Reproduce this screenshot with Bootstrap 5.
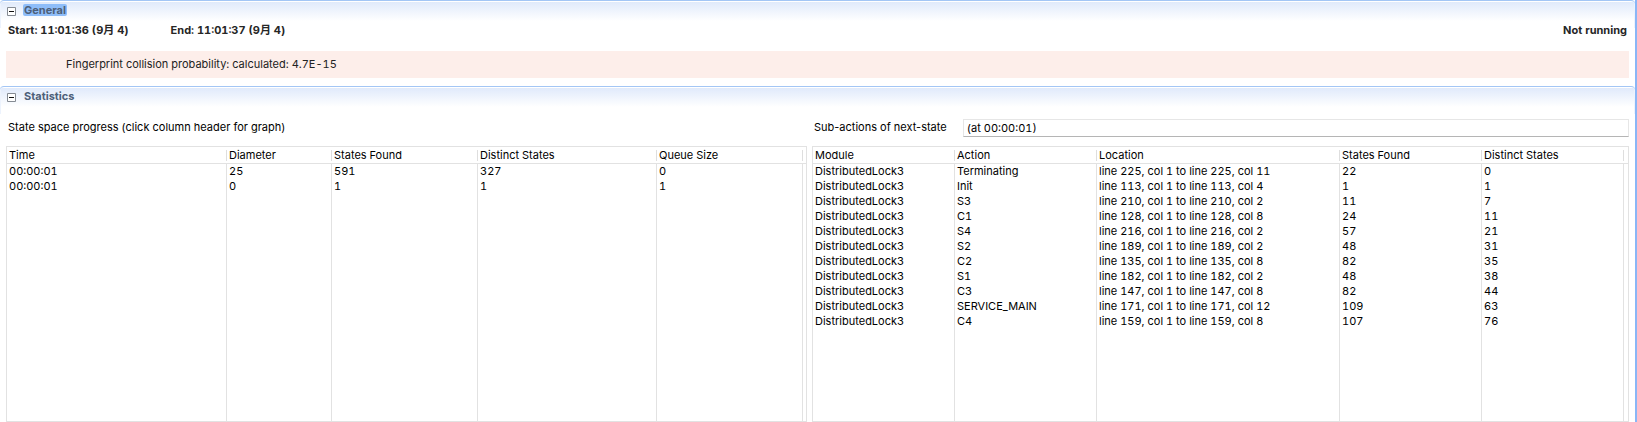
<!DOCTYPE html>
<html lang="en">
<head>
<meta charset="utf-8">
<meta name="viewport" content="width=device-width, initial-scale=1">
<title>Model Checking Results</title>
<link href="https://cdn.jsdelivr.net/npm/bootstrap@5.3.0/dist/css/bootstrap.min.css" rel="stylesheet">
<style>
  body { font: 11px/15px Inter, "Noto Sans CJK JP", sans-serif; color: #000; background: #fff; border-right: 2px solid #8ab6f6; }
  .run-line, .notice, .moment, .data-grid { font-variant-numeric: tabular-nums; }
  .section-bar { height: 28px; padding: 3px 7px 0; gap: 7px; border-top: 1px solid #a3c6f5; border-radius: 4px 4px 0 0;
    background: linear-gradient(#fff 0 1px, #e0eafb 1px, #fff 20px);
    box-shadow: inset 1px 0 0 #edf3fd, inset -1px 0 0 #edf3fd; }
  .section-title { font-size: 11px; line-height: 12px; font-weight: 700; color: #4d6079; padding: 0 1px; margin: 0; }
  .section-title.picked { background: #8ebdf9; border-radius: 2px; }
  .fold { width: 9px; height: 9px; margin-top: 3px; background: none; }
  .run-line { font-weight: 700; color: #262626; padding: 0 8px; gap: 42px; margin-top: -5px; }
  .notice { background: #fdeeea; color: #222; margin: 13px 6px 8px; padding: 6px 60px; }
  .stats { padding: 0 6px; gap: 5px; display: grid; grid-template-columns: 801fr 817fr; }
  .caption-row { height: 18px; line-height: 16px; padding-left: 2px; gap: 16px; margin: 5px 0 9px; }
  .moment { height: 18px; border: 1px solid #e6e6e6; border-bottom-color: #b5b5b5; padding: 0 3px; color: #000; background: #fff; }
  .grid-frame { border: 1px solid #e2e2e2; }
  .data-grid { table-layout: fixed; border-collapse: separate; border-spacing: 0; height: 100%; width: 100%; }
  .data-grid th { height: 17px; padding: 0 2px; font-weight: 400; border-bottom: 1px solid #e2e2e2; white-space: nowrap;
    background: linear-gradient(#dedede, #dedede) right 3px / 1px 11px no-repeat; }
  .data-grid td { height: 15px; padding: 0 2px; border-right: 1px solid #e2e2e2; white-space: nowrap; }
  .data-grid th:last-child { background: none; }
  .data-grid td:last-child { border-right: 0; }
  .data-grid .rest td { height: auto; }
  .sorter { font: inherit; color: inherit; background: none; }
</style>
</head>
<body class="min-vh-100 d-flex flex-column">
<section>
  <header class="section-bar d-flex align-items-start">
    <button class="fold border-0 p-0 d-flex" type="button" aria-label="Collapse General"><svg width="9" height="9" viewBox="0 0 9 9"><path d="M.5.5h8v8h-8z" fill="#fff" stroke="#858b93"/><path d="M2 4.5h5" stroke="#111"/></svg></button>
    <h2 class="section-title picked">General</h2>
  </header>
  <div class="run-line d-flex">
    <span>Start: 11:01:36 (9月 4)</span>
    <span>End: 11:01:37 (9月 4)</span>
    <span class="ms-auto">Not running</span>
  </div>
  <div class="notice">Fingerprint collision probability: calculated: 4.7E-15</div>
</section>
<section class="flex-grow-1 d-flex flex-column">
  <header class="section-bar d-flex align-items-start">
    <button class="fold border-0 p-0 d-flex" type="button" aria-label="Collapse Statistics"><svg width="9" height="9" viewBox="0 0 9 9"><path d="M.5.5h8v8h-8z" fill="#fff" stroke="#858b93"/><path d="M2 4.5h5" stroke="#111"/></svg></button>
    <h2 class="section-title">Statistics</h2>
  </header>
  <div class="stats flex-grow-1">
    <div class="d-flex flex-column">
      <div class="caption-row d-flex align-items-start">State space progress (click column header for graph)</div>
      <div class="grid-frame flex-grow-1 d-flex">
        <table class="data-grid">
          <colgroup><col style="width:220px"><col style="width:105px"><col style="width:146px"><col style="width:179px"><col style="width:146px"><col></colgroup>
          <thead><tr>
            <th><button class="sorter border-0 p-0" type="button">Time</button></th>
            <th><button class="sorter border-0 p-0" type="button">Diameter</button></th>
            <th><button class="sorter border-0 p-0" type="button">States Found</button></th>
            <th><button class="sorter border-0 p-0" type="button">Distinct States</button></th>
            <th><button class="sorter border-0 p-0" type="button">Queue Size</button></th><th></th>
          </tr></thead>
          <tbody>
            <tr><td>00:00:01</td><td>25</td><td>591</td><td>327</td><td>0</td><td></td></tr>
            <tr><td>00:00:01</td><td>0</td><td>1</td><td>1</td><td>1</td><td></td></tr>
            <tr class="rest"><td></td><td></td><td></td><td></td><td></td><td></td></tr>
          </tbody>
        </table>
      </div>
    </div>
    <div class="d-flex flex-column">
      <div class="caption-row d-flex align-items-start">
        <label for="moment">Sub-actions of next-state</label>
        <input class="moment flex-grow-1" id="moment" type="text" value="(at 00:00:01)" readonly>
      </div>
      <div class="grid-frame flex-grow-1 d-flex">
        <table class="data-grid">
          <colgroup><col style="width:142px"><col style="width:142px"><col style="width:243px"><col style="width:142px"><col style="width:142px"><col></colgroup>
          <thead><tr><th>Module</th><th>Action</th><th>Location</th><th>States Found</th><th>Distinct States</th><th></th></tr></thead>
          <tbody>
            <tr><td>DistributedLock3</td><td>Terminating</td><td>line 225, col 1 to line 225, col 11</td><td>22</td><td>0</td><td></td></tr>
            <tr><td>DistributedLock3</td><td>Init</td><td>line 113, col 1 to line 113, col 4</td><td>1</td><td>1</td><td></td></tr>
            <tr><td>DistributedLock3</td><td>S3</td><td>line 210, col 1 to line 210, col 2</td><td>11</td><td>7</td><td></td></tr>
            <tr><td>DistributedLock3</td><td>C1</td><td>line 128, col 1 to line 128, col 8</td><td>24</td><td>11</td><td></td></tr>
            <tr><td>DistributedLock3</td><td>S4</td><td>line 216, col 1 to line 216, col 2</td><td>57</td><td>21</td><td></td></tr>
            <tr><td>DistributedLock3</td><td>S2</td><td>line 189, col 1 to line 189, col 2</td><td>48</td><td>31</td><td></td></tr>
            <tr><td>DistributedLock3</td><td>C2</td><td>line 135, col 1 to line 135, col 8</td><td>82</td><td>35</td><td></td></tr>
            <tr><td>DistributedLock3</td><td>S1</td><td>line 182, col 1 to line 182, col 2</td><td>48</td><td>38</td><td></td></tr>
            <tr><td>DistributedLock3</td><td>C3</td><td>line 147, col 1 to line 147, col 8</td><td>82</td><td>44</td><td></td></tr>
            <tr><td>DistributedLock3</td><td>SERVICE_MAIN</td><td>line 171, col 1 to line 171, col 12</td><td>109</td><td>63</td><td></td></tr>
            <tr><td>DistributedLock3</td><td>C4</td><td>line 159, col 1 to line 159, col 8</td><td>107</td><td>76</td><td></td></tr>
            <tr class="rest"><td></td><td></td><td></td><td></td><td></td><td></td></tr>
          </tbody>
        </table>
      </div>
    </div>
  </div>
</section>
<script src="https://cdn.jsdelivr.net/npm/bootstrap@5.3.0/dist/js/bootstrap.bundle.min.js"></script>
</body>
</html>
